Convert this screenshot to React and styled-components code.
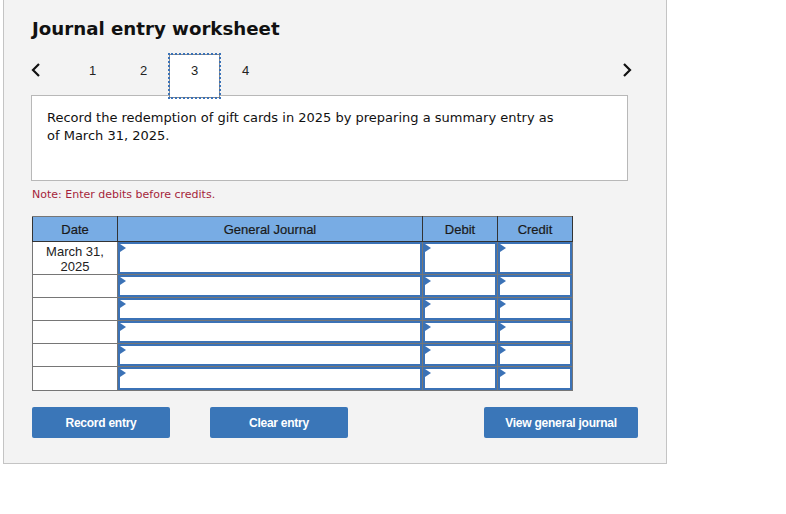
import React from 'react';
import styled, { createGlobalStyle } from 'styled-components';

const GlobalStyle = createGlobalStyle`
  html, body {
    margin: 0;
    padding: 0;
    background: #ffffff;
  }
  * {
    box-sizing: border-box;
  }
`;

const Panel = styled.div`
  margin-left: 3px;
  width: 664px;
  height: 464px;
  background: #f3f3f3;
  border: 1px solid #c4c4c4;
  border-top: none;
  padding: 17px 28px 0 28px;
  font-family: 'DejaVu Sans', Verdana, sans-serif;
`;

const Title = styled.h1`
  margin: 0;
  font-size: 18.2px;
  font-weight: bold;
  color: #111;
  line-height: 24px;
`;

const Nav = styled.div`
  display: flex;
  align-items: flex-start;
  height: 44px;
  margin-top: 13px;
  position: relative;
  z-index: 1;
`;

const Arrow = styled.button`
  border: none;
  background: none;
  padding: 0;
  margin-top: 8px;
  width: 16px;
  height: 16px;
  display: flex;
  align-items: center;
  justify-content: center;
  margin-left: ${p => (p.right ? 'auto' : '-4px')};
  margin-right: ${p => (p.right ? '3px' : '0')};
`;

const Tabs = styled.div`
  display: flex;
  margin-left: 23px;
`;

const Tab = styled.div`
  width: 51px;
  height: 44px;
  padding-top: 8px;
  line-height: 16px;
  text-align: center;
  font-family: 'Liberation Sans', Arial, sans-serif;
  font-size: 13px;
  color: #222;
  background: ${p => (p.active ? '#fff' : 'transparent')};
  border: 1px solid ${p => (p.active ? '#8a8a8a' : 'transparent')};
  outline: ${p => (p.active ? '2px dotted #3a72b8' : 'none')};
  outline-offset: -1px;
`;

const Prompt = styled.div`
  margin-top: -3px;
  margin-left: -1px;
  width: 597px;
  height: 86px;
  background: #fff;
  border: 1px solid #b8b8b8;
  padding: 13px 15px;
  font-size: 13px;
  line-height: 18px;
  color: #111;
`;

const Note = styled.div`
  margin-top: 8px;
  font-size: 11px;
  color: #a51f3b;
  line-height: 12px;
`;

const Table = styled.table`
  margin-top: 15px;
  border-collapse: collapse;
  font-family: 'Liberation Sans', Arial, sans-serif;
  font-size: 13px;
  color: #222;
  border: 1px solid #767676;
`;

const Th = styled.th`
  width: ${p => p.w}px;
  height: 25px;
  background: #78ace4;
  border: 1px solid #333;
  border-top-color: #767676;
  font-weight: normal;
  padding: 0;
  color: #1a1a1a;
  -webkit-text-stroke: 0.2px #1a1a1a;
`;

const DateTd = styled.td`
  border: 1px solid #767676;
  background: #fff;
  text-align: center;
  vertical-align: top;
  padding: 2px 0 0 0;
  line-height: 15px;
  height: ${p => p.h}px;
`;

const InputTd = styled.td`
  border: 1px solid #767676;
  padding: 0;
  height: ${p => p.h}px;
  background: #767676;
`;

const Field = styled.div`
  position: relative;
  height: 100%;
  background: #fff;
  border: 2px solid #3b72b6;

  &::before {
    content: '';
    position: absolute;
    left: 0;
    top: 0;
    border-left: 6px solid #3b72b6;
    border-top: 4px solid transparent;
    border-bottom: 4px solid transparent;
  }
`;

const Buttons = styled.div`
  display: flex;
  margin-top: 16px;
  width: 606px;
`;

const Button = styled.button`
  width: ${p => p.w}px;
  height: 31px;
  margin-left: ${p => p.gap}px;
  padding: 0;
  background: #3a76b8;
  border: none;
  border-radius: 2px;
  color: #fff;
  font-family: 'Liberation Sans', Arial, sans-serif;
  font-weight: bold;
  font-size: 12px;
  letter-spacing: -0.25px;
  white-space: nowrap;
`;

const Chevron = ({ dir }) => (
  <svg width="12" height="16" viewBox="0 0 12 16">
    <path
      d={dir === 'left' ? 'M9 2 L3 8 L9 14' : 'M3 2 L9 8 L3 14'}
      fill="none"
      stroke="#111"
      strokeWidth="2.2"
    />
  </svg>
);

const rows = [
  { h: 33, date: ['March 31,', '2025'] },
  { h: 23 },
  { h: 23 },
  { h: 23 },
  { h: 23 },
  { h: 24 },
];

const App = () => (
  <>
    <GlobalStyle />
    <Panel>
      <Title>Journal entry worksheet</Title>
      <Nav>
        <Arrow><Chevron dir="left" /></Arrow>
        <Tabs>
          <Tab>1</Tab>
          <Tab>2</Tab>
          <Tab active>3</Tab>
          <Tab>4</Tab>
        </Tabs>
        <Arrow right><Chevron dir="right" /></Arrow>
      </Nav>
      <Prompt>
        Record the redemption of gift cards in 2025 by preparing a summary entry as<br />
        of March 31, 2025.
      </Prompt>
      <Note>Note: Enter debits before credits.</Note>
      <Table>
        <thead>
          <tr>
            <Th w={85}>Date</Th>
            <Th w={305}>General Journal</Th>
            <Th w={75}>Debit</Th>
            <Th w={75}>Credit</Th>
          </tr>
        </thead>
        <tbody>
          {rows.map((r, i) => (
            <tr key={i}>
              <DateTd h={r.h}>
                {r.date && (
                  <>
                    {r.date[0]}
                    <br />
                    {r.date[1]}
                  </>
                )}
              </DateTd>
              <InputTd h={r.h}><Field /></InputTd>
              <InputTd h={r.h}><Field /></InputTd>
              <InputTd h={r.h}><Field /></InputTd>
            </tr>
          ))}
        </tbody>
      </Table>
      <Buttons>
        <Button w={138} gap={0}>Record entry</Button>
        <Button w={138} gap={40}>Clear entry</Button>
        <Button w={154} gap={136}>View general journal</Button>
      </Buttons>
    </Panel>
  </>
);

export default App;
